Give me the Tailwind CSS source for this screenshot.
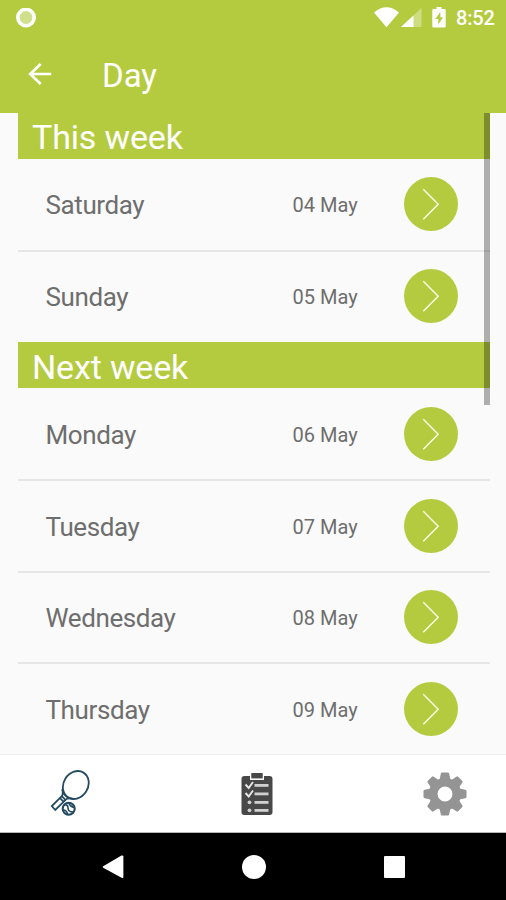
<!DOCTYPE html>
<html lang="en">
<head>
    <meta charset="UTF-8">
    <meta name="viewport" content="width=device-width, initial-scale=1.0">
    <title>Day</title>
    <script src="https://cdn.jsdelivr.net/npm/@tailwindcss/browser@4"></script>
</head>
<body class="bg-[#fafafa] font-[Roboto,sans-serif] overflow-hidden">
    <!-- Chevron used by every row -->
    <svg class="hidden">
        <symbol id="chevron" viewBox="0 0 54 54">
            <path d="M19.3 12.3 L34.2 27.3 L19.3 42.3" fill="none" stroke="#fbfde8" stroke-width="1.4"/>
        </symbol>
    </svg>

    <div class="w-[506px] h-[900px] flex flex-col overflow-hidden">
        <!-- Header -->
        <header class="h-[113px] shrink-0 bg-[#b5cb3f] text-white flex flex-col">
            <div class="h-9 flex items-center justify-between pl-4 pr-[11px]">
                <svg class="w-5 h-5" viewBox="0 0 20 20">
                    <circle cx="10" cy="9.5" r="8.2" fill="#d0df8b" stroke="#fff" stroke-width="3.6"/>
                </svg>
                <div class="flex items-center">
                    <svg class="w-[74px] h-6" viewBox="0 0 74 24">
                        <path d="M0 6.4 Q12.5 -4 25 6.4 L12.5 21.2 Z" fill="#fff"/>
                        <path d="M27 21 L47.5 2 V21 Z" fill="#fff" opacity=".35"/>
                        <path d="M27 21 L39.5 9.4 V21 Z" fill="#fff"/>
                        <path d="M62.5 1 h5 v2 h3 q1.2 0 1.2 1.2 v16 q0 1.2 -1.2 1.2 h-11 q-1.2 0 -1.2 -1.2 v-16 q0 -1.2 1.2 -1.2 h3 Z" fill="#fff"/>
                        <path d="M66.3 6 L61.3 13 H64.3 V18.5 L69 11.2 H66.3 Z" fill="#b5cb3f"/>
                    </svg>
                    <span class="w-[39px] ml-2 text-[20px] leading-6 font-medium tracking-[-0.2px] whitespace-nowrap">8:52</span>
                </div>
            </div>
            <div class="h-[77px] flex items-center pl-7">
                <svg class="w-6 h-6" viewBox="0 0 24 24" fill="none" stroke="#fff" stroke-width="2.7">
                    <path d="M23.2 11 H2.5 M12.6 1 L2.3 11 L12.6 21"/>
                </svg>
                <h1 class="ml-[50px] pt-[2px] text-[33px] leading-10">Day</h1>
            </div>
        </header>

        <!-- Day list -->
        <main class="relative h-[641px] shrink-0 mx-[17.5px] mr-4 overflow-hidden text-[#6e6e6e]">
            <h2 class="h-[45.5px] pl-[14.5px] pt-[3px] bg-[#b5cb3f] text-white text-[34px] leading-[42px] tracking-[-0.15px]">This week</h2>
            <div class="h-[93.5px] flex items-center border-b-2 border-[#e6e6e6] pl-7 pr-8">
                <span class="w-[247px] text-[26px] tracking-[-0.4px] pt-[3px]">Saturday</span>
                <span class="w-[111px] text-[20px] pt-[2px]">04 May</span>
                <svg class="w-[54px] h-[54px] rounded-full bg-[#b5cb3f]"><use href="#chevron"/></svg>
            </div>
            <div class="h-[90px] flex items-center pl-7 pr-8 pb-[2px]">
                <span class="w-[247px] text-[26px] tracking-[-0.4px] pt-[3px]">Sunday</span>
                <span class="w-[111px] text-[20px] pt-[2px]">05 May</span>
                <svg class="w-[54px] h-[54px] rounded-full bg-[#b5cb3f]"><use href="#chevron"/></svg>
            </div>
            <h2 class="h-[46px] pl-[14.5px] pt-1 bg-[#b5cb3f] text-white text-[34px] leading-[42px] tracking-[-0.15px]">Next week</h2>
            <div class="h-[93px] flex items-center border-b-2 border-[#e6e6e6] pl-7 pr-8">
                <span class="w-[247px] text-[26px] tracking-[-0.4px] pt-[3px]">Monday</span>
                <span class="w-[111px] text-[20px] pt-[2px]">06 May</span>
                <svg class="w-[54px] h-[54px] rounded-full bg-[#b5cb3f]"><use href="#chevron"/></svg>
            </div>
            <div class="h-[91.5px] flex items-center border-b-2 border-[#e6e6e6] pl-7 pr-8">
                <span class="w-[247px] text-[26px] tracking-[-0.4px] pt-[3px]">Tuesday</span>
                <span class="w-[111px] text-[20px] pt-[2px]">07 May</span>
                <svg class="w-[54px] h-[54px] rounded-full bg-[#b5cb3f]"><use href="#chevron"/></svg>
            </div>
            <div class="h-[91.5px] flex items-center border-b-2 border-[#e6e6e6] pl-7 pr-8">
                <span class="w-[247px] text-[26px] tracking-[-0.4px] pt-[3px]">Wednesday</span>
                <span class="w-[111px] text-[20px] pt-[2px]">08 May</span>
                <svg class="w-[54px] h-[54px] rounded-full bg-[#b5cb3f]"><use href="#chevron"/></svg>
            </div>
            <div class="h-[91px] flex items-center pl-7 pr-8 pb-[2px]">
                <span class="w-[247px] text-[26px] tracking-[-0.4px] pt-[3px]">Thursday</span>
                <span class="w-[111px] text-[20px] pt-[2px]">09 May</span>
                <svg class="w-[54px] h-[54px] rounded-full bg-[#b5cb3f]"><use href="#chevron"/></svg>
            </div>
            <!-- Scrollbar -->
            <div class="absolute top-0 right-0 w-[6px] h-[292px] bg-black/30"></div>
        </main>

        <!-- Tab bar -->
        <nav class="h-[79px] shrink-0 bg-white border-t border-[#f0f0f0] border-b-[#b8b8b8] border-b flex items-center justify-between pl-[47.5px] pr-[39px]">
            <svg class="w-11 h-[50px]" viewBox="0 0 44 50" fill="none" stroke="#234a60" stroke-width="1.8">
                <ellipse cx="27.8" cy="16" rx="12.2" ry="14.6" transform="rotate(32 27.8 16)"/>
                <path d="M14.2 20 Q15.5 25 13.8 27.2 L3.8 37 L7.3 41 L17.5 30.8 Q20 28.5 26 30.2"/>
                <path d="M13.8 27.2 L17.5 30.8 M12 29.2 L15.5 32.6 M14.5 23.5 L20.3 29.2"/>
                <circle cx="20.7" cy="39.8" r="6" stroke-width="2.1"/>
                <path d="M16 36 Q20 35 20 39 T25.5 43 M21 34 Q21.5 37 26 38.5 M15 41 Q19 41 20 46" stroke-width="1.6"/>
            </svg>
            <svg class="w-8 h-11" viewBox="0 0 32 44">
                <rect x=".5" y="4" width="31" height="39" rx="3" fill="#484848"/>
                <path d="M9 3 H23 V8 H9 Z" fill="#fff"/>
                <rect x="10.3" y="1" width="11.4" height="5.4" fill="#484848"/>
                <g fill="#d0d0d0">
                    <rect x="13.5" y="12" width="14" height="2.8"/>
                    <rect x="13.5" y="20.5" width="14" height="2.8"/>
                    <rect x="13.5" y="29" width="14" height="2.8"/>
                    <rect x="13.5" y="37" width="14" height="2.8"/>
                    <circle cx="8.5" cy="30.3" r="1.9"/>
                    <circle cx="8.5" cy="38.3" r="1.9"/>
                </g>
                <path d="M4.5 12.5 L7.7 16 L12 10 M4.5 21 L7.7 24.5 L12 18.5" fill="none" stroke="#e8e8e8" stroke-width="1.9"/>
            </svg>
            <svg class="w-11 h-11" viewBox="-22 -22 44 44" fill="#949494">
                <circle r="11.8" fill="none" stroke="#949494" stroke-width="8.6"/>
                <path id="tooth" d="M-5.5 -14 L-4.2 -20.3 Q-4 -21.5 -3 -21.5 H3 Q4 -21.5 4.2 -20.3 L5.5 -14 Z"/>
                <use href="#tooth" transform="rotate(45)"/>
                <use href="#tooth" transform="rotate(90)"/>
                <use href="#tooth" transform="rotate(135)"/>
                <use href="#tooth" transform="rotate(180)"/>
                <use href="#tooth" transform="rotate(225)"/>
                <use href="#tooth" transform="rotate(270)"/>
                <use href="#tooth" transform="rotate(315)"/>
            </svg>
        </nav>

        <!-- Android navigation -->
        <div class="h-[67px] shrink-0 bg-black flex items-center justify-between pl-[102px] pr-[101px]">
            <svg class="w-[22px] h-6" viewBox="0 0 22 24"><path d="M1.2 11.2 L19.5 .6 Q21.4 0 21.4 1.6 V21.8 Q21.4 23.6 19.6 22.7 L1.2 12.8 Q0 12 1.2 11.2 Z" fill="#fff"/></svg>
            <div class="w-6 h-6 rounded-full bg-white"></div>
            <div class="w-[21px] h-[22px] rounded-[1px] bg-white"></div>
        </div>
    </div>
</body>
</html>
